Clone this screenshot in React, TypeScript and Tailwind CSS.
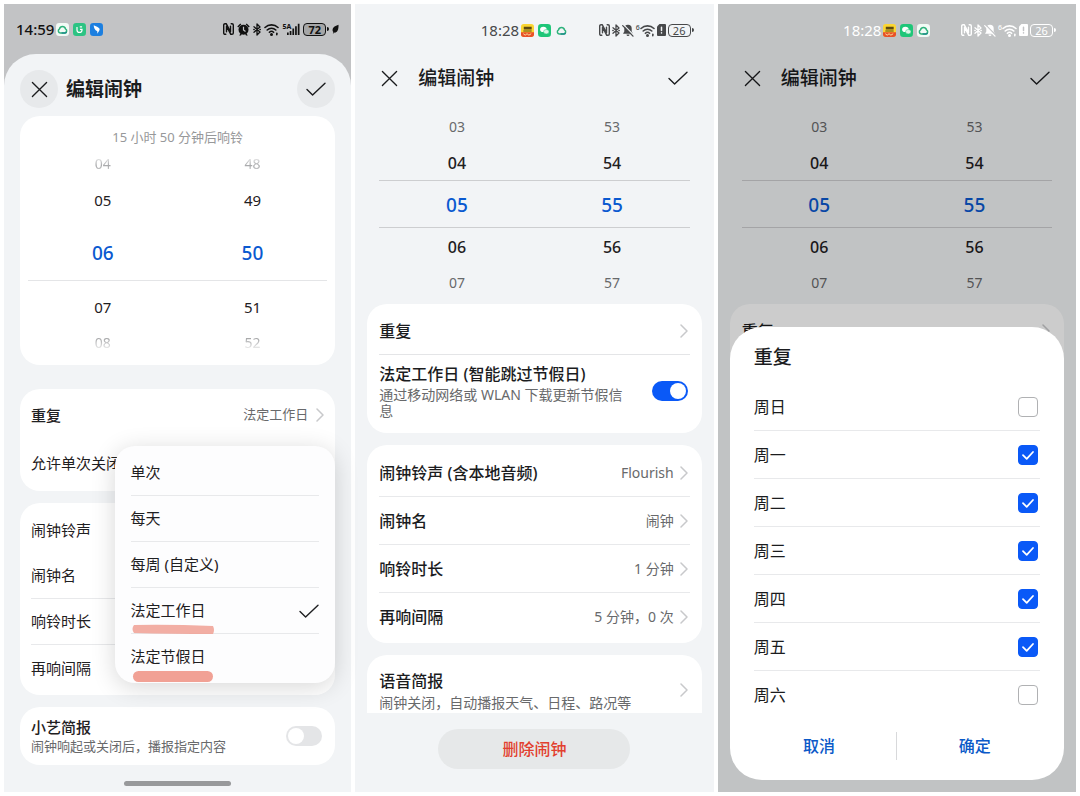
import type { ReactNode } from 'react'
import clsx from 'clsx'

const repeatOptions = ['单次', '每天', '每周 (自定义)', '法定工作日', '法定节假日']

const weekdays = [
  { name: '周日', on: false },
  { name: '周一', on: true },
  { name: '周二', on: true },
  { name: '周三', on: true },
  { name: '周四', on: true },
  { name: '周五', on: true },
  { name: '周六', on: false },
]

const ringSettings = [
  { name: '闹钟铃声 (含本地音频)', value: 'Flourish' },
  { name: '闹钟名', value: '闹钟' },
  { name: '响铃时长', value: '1 分钟' },
  { name: '再响间隔', value: '5 分钟，0 次' },
]

/* ---------- icons ---------- */

function CloseIcon() {
  return (
    <svg width="17" height="17" viewBox="0 0 18 18" fill="none" stroke="currentColor" strokeWidth="1.4" strokeLinecap="round">
      <path d="M1.5 1.5l15 15M16.5 1.5l-15 15" />
    </svg>
  )
}

function CheckIcon() {
  return (
    <svg width="20" height="16" viewBox="0 0 20 16" fill="none" stroke="currentColor" strokeWidth="1.4" strokeLinecap="round" strokeLinejoin="round">
      <path d="M1 8.6l5.600 5.400L19 2.200" />
    </svg>
  )
}

function Chevron() {
  return (
    <svg width="8" height="14" viewBox="0 0 8 14" fill="none" stroke="#c8c9cb" strokeWidth="1.5" strokeLinecap="round" strokeLinejoin="round">
      <path d="M1 1l6 6-6 6" />
    </svg>
  )
}

function NfcIcon() {
  return (
    <svg width="11" height="12" viewBox="0 0 11 12" fill="none" stroke="currentColor" strokeLinecap="round" strokeLinejoin="round">
      <path d="M2.800 11.300H2A1.300 1.300 0 0 1 .7 10V2A1.300 1.300 0 0 1 2 .7h1.200l4.300 8.100V3.200" strokeWidth="1.400" />
      <path d="M8.200.7H9A1.300 1.300 0 0 1 10.300 2v8A1.300 1.300 0 0 1 9 11.300H7.800L3.500 3.200v5.600" strokeWidth="1.400" />
    </svg>
  )
}

function AlarmIcon() {
  return (
    <svg width="13" height="13" viewBox="0 0 13 13" fill="currentColor">
      <circle cx="6.500" cy="6.800" r="5" />
      <path d="M.3 3.400L3.300.5l1 1L1.300 4.400zM12.700 3.400L9.700.5l-1 1 3 2.900zM2.200 12.500l1.300-2 1.300 1-.9 1zM10.800 12.500l-1.300-2-1.300 1 .9 1z" />
      <path d="M6.500 3.800v3.200l2 1.500" fill="none" stroke="#c2c3c5" strokeWidth="1.200" />
    </svg>
  )
}

function BluetoothIcon() {
  return (
    <svg width="8" height="13" viewBox="0 0 8 13" fill="none" stroke="currentColor" strokeWidth="1.300" strokeLinejoin="round" strokeLinecap="round">
      <path d="M1 3.800l6 5.200-3 3V1l3 3-6 5.200" />
      <path d="M.9 6.500h.2M7 6.500h.2" strokeWidth="1.600" />
    </svg>
  )
}

function BellOffIcon({ gap }: { gap: string }) {
  return (
    <svg width="12" height="13" viewBox="0 0 12 13" fill="currentColor" strokeLinecap="round">
      <path d="M6 .8a3.700 3.700 0 0 1 3.700 3.700v3L11 9.800H1l1.300-2.300v-3A3.700 3.700 0 0 1 6 .8zM4.500 10.500h3a1.500 1.500 0 0 1-3 0z" />
      <path d="M1.700.9l10.100 10.300" stroke={gap} strokeWidth="1.300" />
      <path d="M.7 1.600l10.300 10.500" stroke="currentColor" strokeWidth="1.300" />
    </svg>
  )
}

function WifiIcon({ generation }: { generation?: string }) {
  return (
    <span className="flex items-start">
      {generation && <span className="text-[7px] leading-[7px] font-medium">{generation}</span>}
      <svg width="15" height="13" viewBox="0 0 15 13" fill="none" stroke="currentColor" strokeWidth="1.600" strokeLinecap="round">
        <path d="M1 4.500a9.300 9.300 0 0 1 13 0M3.200 7a6.100 6.100 0 0 1 8.600 0M5.400 9.300a3 3 0 0 1 4.200 0" />
        <circle cx="7.500" cy="11.500" r=".7" fill="currentColor" />
        <path d="M12.800 10.300v1.400" />
      </svg>
    </span>
  )
}

function SignalIcon() {
  return (
    <span className="flex items-start">
      <span className="text-[7px] leading-[7px] font-bold">5A</span>
      <svg className="-ml-1" width="13" height="13" viewBox="0 0 13 13" fill="currentColor">
        <path d="M0 9.500h1.700V12H0zM2.700 8h1.700v4H2.700zM5.400 5.500h1.700V12H5.400zM8.100 3.200h1.700V12H8.100zM10.800.8h1.700V12h-1.700z" />
      </svg>
    </span>
  )
}

function SimAlertIcon({ gap }: { gap: string }) {
  return (
    <svg width="9" height="12" viewBox="0 0 9 12">
      <path d="M2.500 0H8a1 1 0 0 1 1 1v10a1 1 0 0 1-1 1H1a1 1 0 0 1-1-1V2.500z" fill="currentColor" />
      <path d="M4.500 3.200v3.200M4.500 8.700v.2" stroke={gap} strokeWidth="1.500" strokeLinecap="round" />
    </svg>
  )
}

function LeafIcon() {
  return (
    <svg width="7" height="10" viewBox="0 0 7 9" fill="currentColor">
      <path d="M6.500.3C3 1.300.5 3 .5 5.500c0 1 .4 1.700 1 2.200l-.7 1 .7.200.7-.8c2.800.4 4.600-2.500 4.300-7.800z" />
    </svg>
  )
}

function Battery({ level, low }: { level: number; low?: boolean }) {
  return (
    <span className="flex items-center">
      <span
        className={clsx(
          'flex h-[13px] w-[23px] items-center justify-center rounded border border-current text-[11px] leading-none',
          low ? 'font-normal' : 'bg-black/15 font-bold',
        )}
      >
        {level}
      </span>
      <span className="ml-px h-1 w-0.5 rounded-r bg-current" />
    </span>
  )
}

function CloudApp({ plain }: { plain?: boolean }) {
  return (
    <svg width="13" height="13" viewBox="0 0 14 14">
      {!plain && <rect width="14" height="14" rx="3.500" fill="#f2fbf6" />}
      <path d="M4.500 10.800a2.400 2.400 0 0 1-.7-4.500 3.300 3.300 0 0 1 6.400 0 2.400 2.400 0 0 1-.7 4.500z" fill="none" stroke="#2fb27c" strokeWidth="1.600" />
      <path d="M6 10.800h3.400a2.400 2.400 0 0 0 1.900-1.100" fill="none" stroke="#1f8f8a" strokeWidth="1.600" />
    </svg>
  )
}

function GreenApp() {
  return (
    <svg width="13" height="13" viewBox="0 0 14 14">
      <rect width="14" height="14" rx="3.500" fill="#2cc383" />
      <path d="M4.300 4.300v3.200a2.700 2.700 0 0 0 5.400 0V6.800H7.500M7.300 4.200h2.500" fill="none" stroke="#fff" strokeWidth="1.300" />
    </svg>
  )
}

function BlueApp() {
  return (
    <svg width="13" height="13" viewBox="0 0 14 14">
      <rect width="14" height="14" rx="3.500" fill="#1c7fe0" />
      <path d="M4 2.500c2 1 5.500 2.300 6.300 3.700.6 1.200-1.300 3.500-2.300 5.300l-.2-2.700C5.200 8 4 5 4 2.500z" fill="#fff" />
    </svg>
  )
}

function YellowApp() {
  return (
    <svg width="13" height="13" viewBox="0 0 14 14">
      <rect width="14" height="14" rx="3" fill="#fbd632" />
      <path d="M0 9h14v2a3 3 0 0 1-3 3H3a3 3 0 0 1-3-3z" fill="#e8502a" />
      <path d="M3 3h8.500v3H3zM2.500 7h9v1.200h-9z" fill="#5d4a12" />
      <path d="M2.500 10.500l2 1.500 2-1.500 2 1.500 2.500-1.500" fill="none" stroke="#fbe9a0" />
    </svg>
  )
}

function WechatApp() {
  return (
    <svg width="13" height="13" viewBox="0 0 14 14">
      <rect width="14" height="14" rx="3.500" fill="#1ec678" />
      <ellipse cx="5.800" cy="5.800" rx="3.500" ry="2.900" fill="#fff" />
      <ellipse cx="8.900" cy="8.300" rx="2.900" ry="2.400" fill="#d8f6e6" stroke="#1ec678" strokeWidth=".5" />
    </svg>
  )
}

/* ---------- shared parts ---------- */

function Card({ className, children }: { className?: string; children: ReactNode }) {
  return <div className={clsx('bg-white', className)}>{children}</div>
}

function Toggle({ label, on }: { label: string; on?: boolean }) {
  return (
    <input
      type="checkbox"
      role="switch"
      aria-label={label}
      defaultChecked={on}
      className="relative mr-0.5 h-5 w-9 shrink-0 appearance-none rounded-full bg-[#e4e5e7] before:absolute before:top-0.5 before:left-0.5 before:size-4 before:rounded-full before:bg-white checked:bg-[#0a59f7] checked:before:left-[18px]"
    />
  )
}

function DimStatus({ light }: { light?: boolean }) {
  const gap = light ? '#c2c3c5' : '#f2f4f6'
  return (
    <div
      className={clsx(
        'relative z-10 flex h-[50px] items-center pt-0.5 pr-5 pl-[35%] text-[15px]',
        light ? 'text-white' : 'text-[#47484a]',
      )}
    >
      <span>18:28</span>
      <span className="ml-0.5 flex items-center gap-1">
        <YellowApp />
        <WechatApp />
        <CloudApp plain={!light} />
      </span>
      <span className="ml-auto flex items-center gap-0.5">
        <NfcIcon />
        <BluetoothIcon />
        <BellOffIcon gap={gap} />
        <WifiIcon generation="6" />
        <SimAlertIcon gap={gap} />
        <Battery level={26} low />
      </span>
    </div>
  )
}

function TimeWheel() {
  const rows = [
    ['03', '53'],
    ['04', '54'],
    ['05', '55'],
    ['06', '56'],
    ['07', '57'],
  ]
  return (
    <div className="mx-6 mt-2 mb-1">
      {rows.map((row, i) => (
        <div
          key={row[0]}
          className={clsx(
            'grid grid-cols-2 items-center pt-0.5 text-center',
            i === 2
              ? 'h-12 border-y border-[#cdced0] text-[19px] font-medium text-[#0a59d0]'
              : 'h-9',
            (i === 1 || i === 3) && 'text-base font-medium text-[#1f2022]',
            (i === 0 || i === 4) && 'text-sm text-[#68696b]',
          )}
        >
          <span>{row[0]}</span>
          <span>{row[1]}</span>
        </div>
      ))}
    </div>
  )
}

function FlatHeader() {
  return (
    <header className="flex h-[46px] items-center pt-0.5 pr-[26px] pl-[26px] text-[#1b1c1e]">
      <button aria-label="关闭">
        <CloseIcon />
      </button>
      <h1 className="ml-5 text-[19px] leading-6 font-medium">编辑闹钟</h1>
      <button aria-label="完成" className="ml-auto">
        <CheckIcon />
      </button>
    </header>
  )
}

function RepeatRow() {
  return (
    <button className="flex h-[46px] w-full items-center justify-between pr-0.5 text-base font-medium">
      重复
      <Chevron />
    </button>
  )
}

/* ---------- screens ---------- */

function RepeatMenuScreen() {
  return (
    <section className="flex flex-col bg-[#c2c3c5]">
      <div className="flex h-[50px] items-center px-3 text-[15px] font-medium text-[#111]">
        <span>14:59</span>
        <span className="ml-0.5 flex items-center gap-1">
          <CloudApp />
          <GreenApp />
          <BlueApp />
        </span>
        <span className="ml-auto flex items-center gap-[3px]">
          <NfcIcon />
          <AlarmIcon />
          <BluetoothIcon />
          <WifiIcon />
          <SignalIcon />
          <Battery level={72} />
          <LeafIcon />
        </span>
      </div>

      <div className="flex grow flex-col rounded-t-[32px] bg-[#f2f4f6] px-4 pt-4">
        <header className="flex items-center text-[#1b1c1e]">
          <button aria-label="关闭" className="flex size-[38px] items-center justify-center rounded-full bg-[#e7e9eb]">
            <CloseIcon />
          </button>
          <h1 className="ml-2 text-[19px] leading-6 font-bold">编辑闹钟</h1>
          <button aria-label="完成" className="ml-auto flex size-[38px] items-center justify-center rounded-full bg-[#e7e9eb]">
            <CheckIcon />
          </button>
        </header>

        <Card className="mt-2 rounded-[20px] px-2 pt-3 pb-1">
          <p className="text-center text-[13px] leading-[18px] text-[#97989a]">15 小时 50 分钟后响铃</p>
          <div className="grid h-9 grid-cols-2 items-center text-center text-sm text-[#a8a9ab] [mask-image:linear-gradient(to_bottom,transparent_25%,black_55%,transparent_85%)]">
            <span>04</span>
            <span>48</span>
          </div>
          <div className="grid h-9 grid-cols-2 items-center text-center text-[15px] text-[#1f2022]">
            <span>05</span>
            <span>49</span>
          </div>
          <div className="mt-2 mb-2 grid h-[55px] grid-cols-2 items-center border-b border-[#e4e5e7] text-center text-[19px] font-medium text-[#0a59d0]">
            <span>06</span>
            <span>50</span>
          </div>
          <div className="grid h-9 grid-cols-2 items-center text-center text-[15px] text-[#1f2022]">
            <span>07</span>
            <span>51</span>
          </div>
          <div className="grid h-9 grid-cols-2 items-center text-center text-sm text-[#98999b] [mask-image:linear-gradient(to_bottom,black_30%,transparent_75%)]">
            <span>08</span>
            <span>52</span>
          </div>
        </Card>

        <div className="relative z-10 mt-6">
          <Card className="rounded-[20px] px-[11px] pt-0.5 pb-1 text-[15px] text-[#1f2022]">
            <div className="flex h-12 items-center">
              <span className="font-medium">重复</span>
              <span className="ml-auto text-[13px] text-[#68696b]">法定工作日</span>
              <span className="ml-2">
                <Chevron />
              </span>
            </div>
            <div className="flex h-12 items-center">允许单次关闭</div>
          </Card>

          <ul className="absolute top-[57px] right-0 w-[70%] rounded-[20px] bg-[#fdfdfe] px-4 py-1 text-[15px] text-[#1f2022] shadow-[0_4px_24px_rgba(0,0,0,0.16)]">
            {repeatOptions.map((name, i) => (
              <li key={name} className="relative border-b border-[#e8e9eb] last:border-b-0">
                <button className="flex h-[45px] w-full items-center justify-between">
                  {name}
                  {i === 3 && <CheckIcon />}
                </button>
                {i === 3 && (
                  <svg className="absolute top-9 left-0" width="84" height="11" viewBox="0 0 84 11">
                    <path d="M3 1Q40 .3 82 2Q84 6 82 10Q40 10 3 9Q0 5 3 1z" fill="#f0a094" fillOpacity=".85" />
                  </svg>
                )}
                {i === 4 && (
                  <span className="absolute top-[37px] left-0.5 h-[11px] w-20 rounded-full bg-[#f1a195]" />
                )}
              </li>
            ))}
          </ul>
        </div>

        <Card className="mt-3 rounded-[20px] px-[11px] py-1 text-[15px] text-[#1f2022]">
          <div className="flex h-[46px] items-center">闹钟铃声</div>
          <div className="flex h-[46px] items-center border-b border-[#e8e9eb]">闹钟名</div>
          <div className="flex h-[46px] items-center border-b border-[#e8e9eb]">响铃时长</div>
          <div className="flex h-[46px] items-center">再响间隔</div>
        </Card>

        <Card className="mt-3 flex h-[58px] items-center justify-between rounded-[20px] px-[11px]">
          <div>
            <div className="text-[15px] leading-5 font-medium text-[#1f2022]">小艺简报</div>
            <div className="text-[13px] leading-[18px] text-[#68696b]">闹钟响起或关闭后，播报指定内容</div>
          </div>
          <Toggle label="小艺简报" />
        </Card>

        <div className="mx-auto mt-auto mb-1.5 h-[5px] w-[107px] rounded-full bg-[#98999b]" />
      </div>
    </section>
  )
}

function WorkdayScreen() {
  return (
    <section className="flex flex-col bg-[#f2f4f6] text-[#1b1c1e]">
      <DimStatus />
      <FlatHeader />
      <TimeWheel />

      <Card className="mx-3 rounded-[20px] px-3 pt-1 pb-3.5">
        <RepeatRow />
        <div className="flex items-center justify-between gap-6 border-t border-[#e4e5e7] pt-2">
          <div>
            <div className="text-base leading-[22px] font-medium">法定工作日 (智能跳过节假日)</div>
            <div className="mt-0.5 text-sm leading-4 text-[#68696b]">通过移动网络或 WLAN 下载更新节假信息</div>
          </div>
          <Toggle label="法定工作日" on />
        </div>
      </Card>

      <Card className="mx-3 mt-3 rounded-[20px] px-3 pt-1 pb-0.5">
        {ringSettings.map((item) => (
          <button
            key={item.name}
            className="flex h-12 w-full items-center border-b border-[#e8e9eb] pr-0.5 text-base font-medium last:border-b-0"
          >
            {item.name}
            <span className="ml-auto text-sm font-normal text-[#68696b]">{item.value}</span>
            <span className="ml-1.5">
              <Chevron />
            </span>
          </button>
        ))}
      </Card>

      <Card className="mx-3 mt-3 flex h-[58px] items-end justify-between rounded-t-[20px] pr-3.5 pl-3">
        <div>
          <div className="text-base leading-6 font-medium">语音简报</div>
          <div className="text-sm leading-5 text-[#68696b]">闹钟关闭，自动播报天气、日程、路况等</div>
        </div>
        <span className="mb-4">
          <Chevron />
        </span>
      </Card>

      <button className="mx-auto mt-4 mb-5 h-10 w-48 rounded-full bg-[#e6e8e9] text-base font-medium text-[#e2402f]">
        删除闹钟
      </button>
    </section>
  )
}

function WeekdayDialogScreen() {
  return (
    <section className="relative flex flex-col bg-[#f2f4f6] text-[#1b1c1e]">
      <div className="absolute inset-0 bg-black/20" />
      <DimStatus light />
      <FlatHeader />
      <TimeWheel />
      <Card className="mx-3 rounded-t-[20px] px-3 pt-1 pb-12">
        <RepeatRow />
      </Card>

      <div role="dialog" aria-label="重复" className="absolute inset-x-3 bottom-3 rounded-[32px] bg-white px-6 pb-2">
        <h2 className="flex h-14 items-center pt-1 text-[19px] font-medium">重复</h2>
        {weekdays.map((day) => (
          <label
            key={day.name}
            className="flex h-12 items-center justify-between border-b border-[#e8e9eb] pr-0.5 text-base last-of-type:border-b-0"
          >
            {day.name}
            <span className="relative flex">
              <input
                type="checkbox"
                defaultChecked={day.on}
                className="peer size-5 appearance-none rounded border border-[#b0b1b3] checked:border-[#0a59f7] checked:bg-[#0a59f7]"
              />
              <svg className="pointer-events-none absolute inset-0 hidden peer-checked:block" width="20" height="20" viewBox="0 0 20 20" fill="none" stroke="#fff" strokeWidth="1.800" strokeLinecap="round" strokeLinejoin="round">
                <path d="M5 10.200l3.700 3.600L15 7" />
              </svg>
            </span>
          </label>
        ))}
        <div className="-mx-3 flex h-[53px] items-center text-base font-medium text-[#0a59c8]">
          <button className="flex-1">取消</button>
          <span className="h-7 w-px bg-[#d8d9db]" />
          <button className="flex-1">确定</button>
        </div>
      </div>
    </section>
  )
}

export default function App() {
  return (
    <main className="grid min-h-screen grid-cols-[347fr_358fr_358fr] gap-1 bg-white p-1 font-['Noto_Sans','Noto_Sans_CJK_SC',sans-serif]">
      <RepeatMenuScreen />
      <WorkdayScreen />
      <WeekdayDialogScreen />
    </main>
  )
}
